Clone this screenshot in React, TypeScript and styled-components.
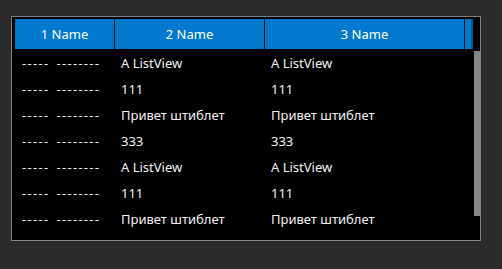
import styled, { createGlobalStyle } from 'styled-components';

const GlobalStyle = createGlobalStyle`
  html, body {
    margin: 0;
    padding: 0;
    background: #2b2b2b;
  }
  body {
    font-family: "Segoe UI", "Noto Sans", sans-serif;
    width: 502px;
    height: 269px;
    overflow: hidden;
  }
`;

const Page = styled.div`
  padding: 16px 0 0 11px;
`;

const Frame = styled.div`
  box-sizing: border-box;
  width: 470px;
  height: 225px;
  border: 1px solid #828282;
  background: #000;
  display: flex;
  overflow: hidden;
`;

const ListArea = styled.div`
  flex: 1;
  padding: 2px 0 0 3px;
  overflow: hidden;
`;

const HeaderRow = styled.div`
  display: flex;
  height: 30px;
`;

const HeaderCell = styled.div<{ $w: number }>`
  box-sizing: border-box;
  width: ${p => p.$w}px;
  flex: none;
  background: #0079cf;
  border-right: 1px solid #0a0a0a;
  color: #fff;
  font-size: 13px;
  display: flex;
  align-items: center;
  justify-content: center;
`;

const HeaderFiller = styled.div`
  width: 6px;
  background: #0079cf;
  border-right: 2px solid #035a9a;
`;

const Row = styled.div`
  box-sizing: border-box;
  display: flex;
  height: 26px;
  padding-top: 2px;
  align-items: center;
`;

const Cell = styled.div<{ $w: number }>`
  box-sizing: border-box;
  width: ${p => p.$w}px;
  flex: none;
  padding-left: 6px;
  color: #f2f2f2;
  font-size: 13px;
  white-space: nowrap;
`;

const Dashes = styled.span`
  display: inline-block;
  letter-spacing: 1.3px;
  padding-left: 1px;
`;

const DashGap = styled.span`
  display: inline-block;
  width: 6px;
`;

const ScrollTrack = styled.div`
  width: 6px;
  flex: none;
  padding-top: 34px;
`;

const ScrollThumb = styled.div`
  height: 165px;
  background: #878787;
`;

const widths = [100, 150, 200];
const values = ['A ListView', '111', 'Привет штиблет', '333'];
const rows = Array.from({ length: 8 }, (_, i) => values[i % 4]);

export default function App() {
  return (
    <Page>
      <GlobalStyle />
      <Frame>
        <ListArea>
          <HeaderRow>
            <HeaderCell $w={widths[0]}>1 Name</HeaderCell>
            <HeaderCell $w={widths[1]}>2 Name</HeaderCell>
            <HeaderCell $w={widths[2]}>3 Name</HeaderCell>
            <HeaderFiller />
          </HeaderRow>
          {rows.map((v, i) => (
            <Row key={i}>
              <Cell $w={widths[0]}>
                <Dashes>-----</Dashes>
                <DashGap />
                <Dashes>--------</Dashes>
              </Cell>
              <Cell $w={widths[1]}>{v}</Cell>
              <Cell $w={widths[2]}>{v}</Cell>
            </Row>
          ))}
        </ListArea>
        <ScrollTrack>
          <ScrollThumb />
        </ScrollTrack>
      </Frame>
    </Page>
  );
}
